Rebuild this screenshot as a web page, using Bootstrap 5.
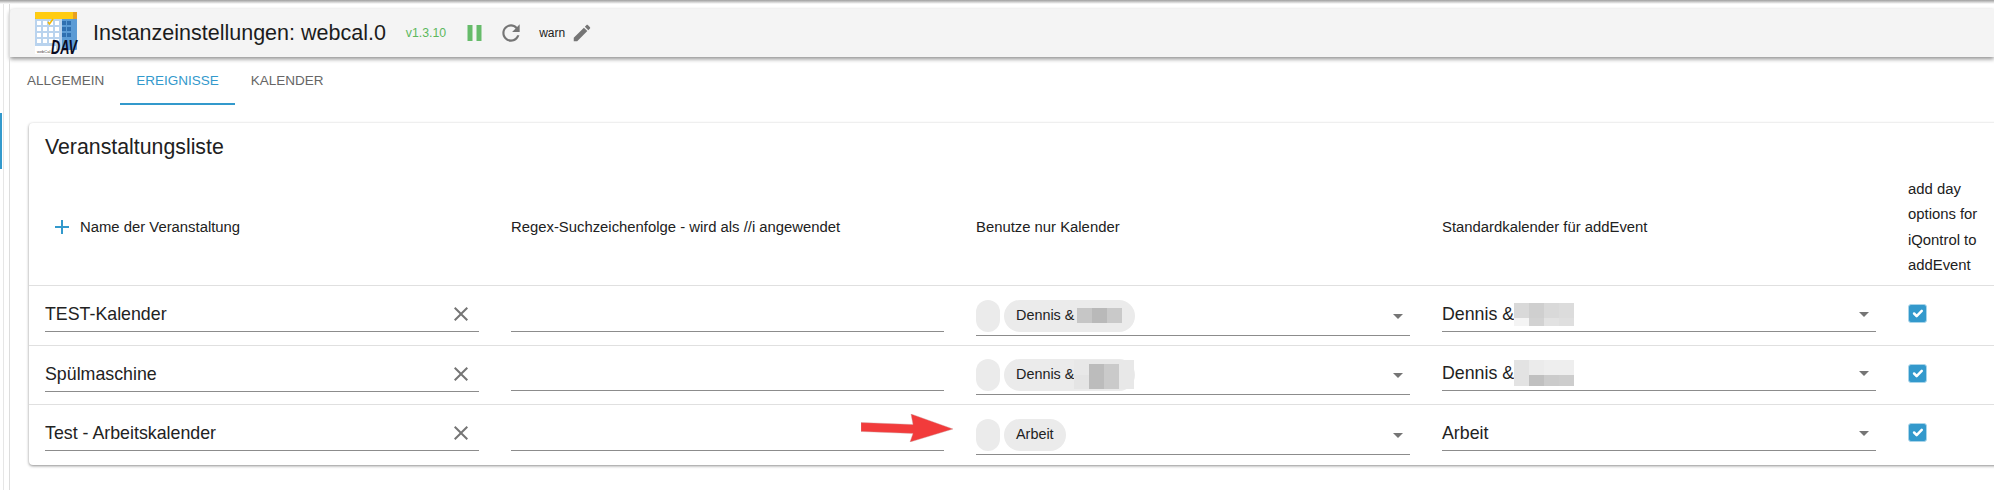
<!DOCTYPE html>
<html lang="de">
<head>
<meta charset="utf-8">
<title>Instanzeinstellungen: webcal.0</title>
<link href="https://cdn.jsdelivr.net/npm/bootstrap@5.3.0/dist/css/bootstrap.min.css" rel="stylesheet">
<style>
html,body{height:490px;overflow:hidden;background:#fff}
body{font-family:"Liberation Sans",Arial,sans-serif;color:#212121;position:relative}
.top-strip{height:4px;background:linear-gradient(#9e9e9e,#d8d8d8 60%,#fff)}
.shell{height:486px}
.rail{width:10px;flex:none;border-right:1px solid #ddd;position:relative}
.rail::before{content:"";position:absolute;left:3px;top:0;bottom:0;width:1px;background:#e6e6e6}
.rail-mark{position:absolute;left:0;top:109px;width:2px;height:56px;background:#3399cc}
.pane{min-width:0;flex:1}
.app-head{height:48px;margin-top:5px;background:#f4f4f4;box-shadow:0 2px 4px rgba(0,0,0,.45);padding-left:25px;border-top-left-radius:4px}
.logo-box{overflow:visible;flex:none}
.app-title{font-size:21.5px;margin-left:16px;color:#1c1c1c}
.app-ver{font-size:12.3px;color:#5cb85c;margin-left:20px}
.app-pause{margin-left:21px}
.app-reload{margin-left:16px}
.app-log{font-size:12px;margin-left:15px;color:#222}
.app-edit{margin-left:6px}
.tab-row{height:48px;margin-left:1px}
.tab-row .nav-link{color:#666;font-size:13.5px;padding:0 16px;height:48px;line-height:48px;text-transform:uppercase;border-radius:0}
.tab-row .nav-link.active{color:#3399cc;border-bottom:2px solid #3399cc}
.evt-card{margin:18px -8px 0 19px;height:342px;border:0;border-radius:4px;box-shadow:0 1px 3px rgba(0,0,0,.45);overflow:hidden}
.evt-title{height:48px;line-height:48px;padding-left:16px;font-size:21.3px;font-weight:400;margin:0;color:#212121}
.evt-table.table{table-layout:fixed;width:100%;margin:0}
.evt-table.table>thead>tr>th{font-weight:400;font-size:14.85px;line-height:25.5px;padding:0 16px;height:114px;vertical-align:middle;color:#212121;border-bottom:1px solid #e0e0e0}
.evt-table.table>tbody>tr>td{padding:0 16px;border-bottom:1px solid #e0e0e0;vertical-align:top}
.evt-table.table>tbody>tr:last-child>td{border-bottom:0}
.evt-table.table>tbody>tr>td.check-cell{padding-top:18px}
.evt-table tr.h60{height:60px}
.evt-table tr.h59{height:59px}
.w-col{width:466px}
.w-col-b{width:465px}
.add-glyph{margin-left:5px;margin-right:6px;margin-top:-2px;flex:none}
.clear-glyph{flex:none;margin-right:6px}
.field{display:flex;align-items:center;height:34px;margin-top:12px;border-bottom:1px solid #8c8c8c;font-size:17.8px;color:#222}
.field .form-control{border:0;background:transparent;padding:0;font-size:17.8px;color:#222;box-shadow:none;border-radius:0;height:33px}
.field.up{margin-top:11px}
.chips{display:flex;align-items:center;height:50px;margin-top:0;padding:14px 0 3px;border-bottom:1px solid #8c8c8c}
.chips.up{height:49px;padding-top:13px}
.chip-blank{width:24px;height:32px;border-radius:12px;background:#ebebeb;margin-right:4px}
.chip{height:32px;border-radius:16px;background:#ebebeb;display:flex;align-items:center;padding:0 12px;font-size:14.4px;font-weight:400;color:#222;flex:none}
.chip.wide{width:131px;padding-right:0}
.grow{flex:1}
.mosaic{flex:none;display:block}
.mosaic.gap-a{margin-left:3px}
.evt-check.form-check-input{width:19px;height:19px;margin:0;border-radius:3px;background-color:#3399cc;border-color:#a9d5ea;display:block;box-shadow:none}
.arrow-mark{position:absolute;left:861px;top:414px}
</style>
</head>
<body>
<div class="top-strip"></div>
<div class="shell d-flex">
  <div class="rail"><div class="rail-mark"></div></div>
  <div class="pane">
    <header class="app-head d-flex align-items-center">
      <svg class="logo-box" width="42" height="42" viewBox="0 0 42 42" aria-label="webCal DAV logo">
        <rect x="0" y="0" width="42" height="38" rx="1" fill="#5b9bd5"/>
        <rect x="0" y="0" width="42" height="7" rx="1" fill="#ffcc11"/>
        <rect x="38" y="0" width="4" height="7" fill="#e8a020"/>
        <rect x="0" y="7" width="27" height="31" fill="#b9d3ee"/>
        <g fill="#fff">
          <rect x="2" y="9" width="4" height="4"/><rect x="8" y="9" width="4" height="4"/><rect x="14" y="9" width="4" height="4"/><rect x="20" y="9" width="4" height="4"/>
          <rect x="2" y="15" width="4" height="4"/><rect x="8" y="15" width="4" height="4"/><rect x="14" y="15" width="4" height="4"/><rect x="20" y="15" width="4" height="4"/>
          <rect x="2" y="21" width="4" height="4"/><rect x="8" y="21" width="4" height="4"/><rect x="14" y="21" width="4" height="4"/><rect x="20" y="21" width="4" height="4"/>
          <rect x="2" y="27" width="4" height="4"/><rect x="8" y="27" width="4" height="4"/><rect x="14" y="27" width="4" height="4"/><rect x="20" y="27" width="4" height="4"/>
        </g>
        <g fill="#2f6fb0">
          <rect x="27" y="9" width="4" height="4"/><rect x="32" y="9" width="4" height="4"/>
          <rect x="27" y="15" width="4" height="4"/><rect x="32" y="15" width="4" height="4"/>
          <rect x="27" y="21" width="4" height="4"/><rect x="32" y="21" width="4" height="4"/>
        </g>
        <path d="M13 10l1.5 2 3.5-5" fill="none" stroke="#f2b705" stroke-width="1.6"/>
        <rect x="0" y="34" width="21" height="8" fill="#fff"/>
        <text x="2" y="40.5" font-family="Liberation Sans, sans-serif" font-size="4" fill="#444">webCal</text>
        <text x="16" y="41.5" font-family="Liberation Sans, sans-serif" font-size="21" font-weight="700" font-style="italic" fill="#0a0a1e" textLength="26" lengthAdjust="spacingAndGlyphs">DAV</text>
      </svg>
      <span class="app-title">Instanzeinstellungen: webcal.0</span>
      <span class="app-ver">v1.3.10</span>
      <svg class="app-pause" width="15" height="16" viewBox="0 0 15 16"><rect x="0.5" width="5" height="16" fill="#66bb6a"/><rect x="9.5" width="5" height="16" fill="#66bb6a"/></svg>
      <svg class="app-reload" width="26" height="26" viewBox="0 0 24 24" fill="#757575"><path d="M17.65 6.35C16.2 4.9 14.21 4 12 4c-4.42 0-7.99 3.58-7.99 8s3.57 8 7.99 8c3.73 0 6.84-2.55 7.73-6h-2.08c-.82 2.33-3.04 4-5.65 4-3.31 0-6-2.69-6-6s2.69-6 6-6c1.66 0 3.14.69 4.22 1.78L13 11h7V4l-2.35 2.35z"/></svg>
      <span class="app-log">warn</span>
      <svg class="app-edit" width="22" height="22" viewBox="0 0 24 24" fill="#757575"><path d="M3 17.25V21h3.75L17.81 9.94l-3.75-3.75L3 17.25zM20.71 7.04c.39-.39.39-1.02 0-1.41l-2.34-2.34c-.39-.39-1.02-.39-1.41 0l-1.83 1.83 3.75 3.75 1.83-1.83z"/></svg>
    </header>
    <nav class="nav tab-row">
      <a class="nav-link" href="#">Allgemein</a>
      <a class="nav-link active" href="#">Ereignisse</a>
      <a class="nav-link" href="#">Kalender</a>
    </nav>
    <section class="card evt-card">
      <h2 class="evt-title">Veranstaltungsliste</h2>
      <table class="table evt-table">
        <colgroup><col class="w-col"><col class="w-col-b"><col class="w-col"><col class="w-col"><col></colgroup>
        <thead>
          <tr>
            <th><div class="d-flex align-items-center"><svg class="add-glyph" width="24" height="24" viewBox="0 0 24 24" fill="#3399cc"><path d="M19 13h-6v6h-2v-6H5v-2h6V5h2v6h6v2z"/></svg><span>Name der Veranstaltung</span></div></th>
            <th>Regex-Suchzeichenfolge - wird als //i angewendet</th>
            <th>Benutze nur Kalender</th>
            <th>Standardkalender für addEvent</th>
            <th>add day options for iQontrol to addEvent</th>
          </tr>
        </thead>
        <tbody>
          <tr class="h60">
            <td><div class="field"><input class="form-control" value="TEST-Kalender" aria-label="Name"><svg class="clear-glyph" width="24" height="24" viewBox="0 0 24 24" fill="#757575"><path d="M19 6.41L17.59 5 12 10.59 6.41 5 5 6.41 10.59 12 5 17.59 6.41 19 12 13.41 17.59 19 19 17.59 13.41 12z"/></svg></div></td>
            <td><div class="field"><input class="form-control" aria-label="Regex"></div></td>
            <td><div class="chips"><span class="chip-blank"></span><span class="chip wide">Dennis &amp;<svg class="mosaic gap-a" width="45" height="15" viewBox="0 0 45 15"><rect width="15" height="15" fill="#c6c6c6"/><rect x="15" width="15" height="15" fill="#b9b9b9"/><rect x="30" width="15" height="15" fill="#c9c9c9"/></svg></span><span class="grow"></span><svg width="24" height="24" viewBox="0 0 24 24" fill="#757575"><path d="M7 10l5 5 5-5z"/></svg></div></td>
            <td><div class="field">Dennis &amp;<svg class="mosaic" width="60" height="23" viewBox="0 0 60 23"><rect width="15" height="15" fill="#d9d9d9"/><rect x="15" width="15" height="15" fill="#cfcfcf"/><rect x="30" width="15" height="15" fill="#d9d9d9"/><rect x="45" width="15" height="15" fill="#dcdcdc"/><rect y="15" width="15" height="8" fill="#f4f4f4"/><rect x="15" y="15" width="15" height="8" fill="#d2d2d2"/><rect x="30" y="15" width="15" height="8" fill="#e2e2e2"/><rect x="45" y="15" width="15" height="8" fill="#dfdfdf"/></svg><span class="grow"></span><svg width="24" height="24" viewBox="0 0 24 24" fill="#757575"><path d="M7 10l5 5 5-5z"/></svg></div></td>
            <td class="check-cell"><input class="form-check-input evt-check" type="checkbox" checked aria-label="add day options"></td>
          </tr>
          <tr class="h59">
            <td><div class="field"><input class="form-control" value="Spülmaschine" aria-label="Name"><svg class="clear-glyph" width="24" height="24" viewBox="0 0 24 24" fill="#757575"><path d="M19 6.41L17.59 5 12 10.59 6.41 5 5 6.41 10.59 12 5 17.59 6.41 19 12 13.41 17.59 19 19 17.59 13.41 12z"/></svg></div></td>
            <td><div class="field up"><input class="form-control" aria-label="Regex"></div></td>
            <td><div class="chips up"><span class="chip-blank"></span><span class="chip wide">Dennis &amp;<svg class="mosaic" width="60" height="29" viewBox="0 0 60 29"><rect width="60" height="15" fill="#e8e8e8"/><rect x="15" y="4" width="15" height="25" fill="#bcbcbc"/><rect x="30" y="4" width="15" height="25" fill="#cacaca"/><rect y="15" width="15" height="14" fill="#e4e4e4"/><rect x="45" y="4" width="15" height="25" fill="#e8e8e8"/></svg></span><span class="grow"></span><svg width="24" height="24" viewBox="0 0 24 24" fill="#757575"><path d="M7 10l5 5 5-5z"/></svg></div></td>
            <td><div class="field up">Dennis &amp;<svg class="mosaic" width="60" height="26" viewBox="0 0 60 26"><rect width="15" height="15" fill="#e3e3e3"/><rect x="15" width="15" height="15" fill="#ebebeb"/><rect x="30" width="30" height="15" fill="#eeeeee"/><rect y="15" width="15" height="11" fill="#e3e3e3"/><rect x="15" y="15" width="15" height="11" fill="#c0c0c0"/><rect x="30" y="15" width="15" height="11" fill="#cbcbcb"/><rect x="45" y="15" width="15" height="11" fill="#cdcdcd"/></svg><span class="grow"></span><svg width="24" height="24" viewBox="0 0 24 24" fill="#757575"><path d="M7 10l5 5 5-5z"/></svg></div></td>
            <td class="check-cell"><input class="form-check-input evt-check" type="checkbox" checked aria-label="add day options"></td>
          </tr>
          <tr>
            <td><div class="field"><input class="form-control" value="Test - Arbeitskalender" aria-label="Name"><svg class="clear-glyph" width="24" height="24" viewBox="0 0 24 24" fill="#757575"><path d="M19 6.41L17.59 5 12 10.59 6.41 5 5 6.41 10.59 12 5 17.59 6.41 19 12 13.41 17.59 19 19 17.59 13.41 12z"/></svg></div></td>
            <td><div class="field"><input class="form-control" aria-label="Regex"></div></td>
            <td><div class="chips"><span class="chip-blank"></span><span class="chip">Arbeit</span><span class="grow"></span><svg width="24" height="24" viewBox="0 0 24 24" fill="#757575"><path d="M7 10l5 5 5-5z"/></svg></div></td>
            <td><div class="field">Arbeit<span class="grow"></span><svg width="24" height="24" viewBox="0 0 24 24" fill="#757575"><path d="M7 10l5 5 5-5z"/></svg></div></td>
            <td class="check-cell"><input class="form-check-input evt-check" type="checkbox" checked aria-label="add day options"></td>
          </tr>
        </tbody>
      </table>
    </section>
  </div>
</div>
<svg class="arrow-mark" width="92" height="28" viewBox="0 0 92 28"><path d="M0 8.5L52 10.5 50 0 92 15 49 28 52 19.5 0 17.5z" fill="#f23b3b" stroke="#c9a0a0" stroke-width=".4"/></svg>
</body>
</html>
